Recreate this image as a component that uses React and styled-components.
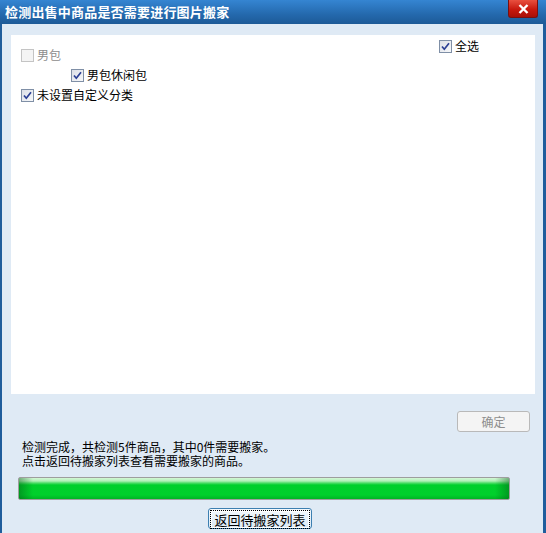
import styled, { createGlobalStyle } from 'styled-components'

const GlobalStyle = createGlobalStyle`
  html, body { margin: 0; padding: 0; background: #dfeaf5; }
  body { font-family: "Noto Sans CJK SC", "Liberation Sans", sans-serif; font-size: 12px; color: #000; }
`

const Window = styled.div`
  width: 546px;
  height: 533px;
  display: flex;
  flex-direction: column;
  background: #dfeaf5;
  overflow: hidden;
`
const TitleBar = styled.div`
  height: 24px;
  flex: none;
  display: flex;
  align-items: center;
  justify-content: space-between;
  padding: 0 8px 0 5px;
  background: linear-gradient(#3585d2, #2469ad 60%, #1d5a97);
  box-sizing: border-box;
`
const Title = styled.div`
  color: #fff;
  font-size: 13px;
  font-weight: bold;
  letter-spacing: 0.2px;
  line-height: 24px;
`
const CloseButton = styled.div`
  align-self: flex-start;
  width: 28px;
  height: 17px;
  border: 1px solid #7a1010;
  border-top: none;
  border-radius: 0 0 3px 3px;
  background: linear-gradient(#e8503f, #c8190e 55%, #a90f08);
  display: flex;
  align-items: center;
  justify-content: center;
`
const Frame = styled.div`
  flex: 1;
  display: flex;
  flex-direction: column;
  border-left: 2px solid #1f5d9c;
  border-right: 3px solid #1f5d9c;
  padding: 11px 8px 0 9px;
`
const Panel = styled.div`
  height: 359px;
  flex: none;
  background: #fff;
  display: flex;
  justify-content: space-between;
  padding: 0 56px 0 10px;
  box-sizing: border-box;
`
const Tree = styled.div`
  display: flex;
  flex-direction: column;
  padding-top: 10px;
`
const Corner = styled.div`
  padding-top: 1px;
`
const Row = styled.label`
  display: flex;
  align-items: center;
  height: 20px;
  padding-left: ${p => p.$indent || 0}px;
  color: ${p => (p.$disabled ? '#8d8d8d' : '#000')};
  line-height: 1;
`
const Box = styled.span`
  width: 11px;
  height: 11px;
  border: 1px solid ${p => (p.$disabled ? '#c4c4c4' : '#7f8fa6')};
  background: ${p => (p.$disabled ? '#f4f4f4' : 'linear-gradient(135deg, #dcdfe6, #f7f8fa)')};
  margin-right: 3px;
  display: flex;
  align-items: center;
  justify-content: center;
  flex: none;
`
const ConfirmRow = styled.div`
  display: flex;
  justify-content: flex-end;
  margin-top: 17px;
  padding-right: 5px;
`
const Button = styled.button`
  height: 21px;
  width: ${p => p.$width}px;
  font-family: inherit;
  font-size: 12px;
  padding: 0;
  border-radius: 3px;
  box-sizing: border-box;
  color: ${p => (p.disabled ? '#8d8d8d' : '#000')};
  border: 1px solid ${p => (p.disabled ? '#b9b9b9' : '#3c7fb1')};
  background: ${p => (p.disabled ? '#f4f4f4' : 'linear-gradient(#f4f9fd, #dbe9f5)')};
`
const FocusInner = styled.span`
  display: block;
  margin: 1px;
  height: 17px;
  line-height: 17px;
  border: 1px dotted #000;
  box-shadow: inset 0 0 0 1px #fff;
  font-size: 13px;
`
const Status = styled.div`
  margin: 8px 0 0 11px;
  font-size: 12px;
`
const StatusLine = styled.div`
  line-height: 14px;
  height: 14px;
`
const Progress = styled.div`
  margin: 9px 0 0 7px;
  width: 492px;
  height: 23px;
  box-sizing: border-box;
  border: 1px solid #9e9e9e;
  border-radius: 2px;
  background:
    linear-gradient(90deg, rgba(0,90,20,0.45), rgba(0,90,20,0) 14px, rgba(0,90,20,0) calc(100% - 14px), rgba(0,90,20,0.45)),
    linear-gradient(#d4f7d6 0, #b2f0b8 3px, #4fdd68 5px, #00cf2b 7px, #00d02c 17px, #00b424 100%);
`
const BottomRow = styled.div`
  display: flex;
  justify-content: flex-start;
  padding-left: 197px;
  margin-top: 8px;
`

const Check = () => (
  <svg width="9" height="9" viewBox="0 0 9 9">
    <path d="M1 4.5 L3.3 7.2 L8 1.2" fill="none" stroke="#2b3f94" strokeWidth="1.7" />
  </svg>
)

const Checkbox = ({ checked, disabled, indent, children }) => (
  <Row $indent={indent} $disabled={disabled}>
    <Box $disabled={disabled}>{checked && <Check />}</Box>
    {children}
  </Row>
)

export default function App() {
  return (
    <Window>
      <GlobalStyle />
      <TitleBar>
        <Title>检测出售中商品是否需要进行图片搬家</Title>
        <CloseButton>
          <svg width="11" height="10" viewBox="0 0 11 10">
            <path d="M1.5 1 L9.5 9 M9.5 1 L1.5 9" stroke="#fff" strokeWidth="2.4" />
          </svg>
        </CloseButton>
      </TitleBar>
      <Frame>
        <Panel>
          <Tree>
            <Checkbox disabled>男包</Checkbox>
            <Checkbox checked indent={50}>男包休闲包</Checkbox>
            <Checkbox checked>未设置自定义分类</Checkbox>
          </Tree>
          <Corner>
            <Checkbox checked>全选</Checkbox>
          </Corner>
        </Panel>
        <ConfirmRow>
          <Button disabled $width={73}>确定</Button>
        </ConfirmRow>
        <Status>
          <StatusLine>检测完成，共检测5件商品，其中0件需要搬家。</StatusLine>
          <StatusLine>点击返回待搬家列表查看需要搬家的商品。</StatusLine>
        </Status>
        <Progress />
        <BottomRow>
          <Button $width={104}>
            <FocusInner>返回待搬家列表</FocusInner>
          </Button>
        </BottomRow>
      </Frame>
    </Window>
  )
}
